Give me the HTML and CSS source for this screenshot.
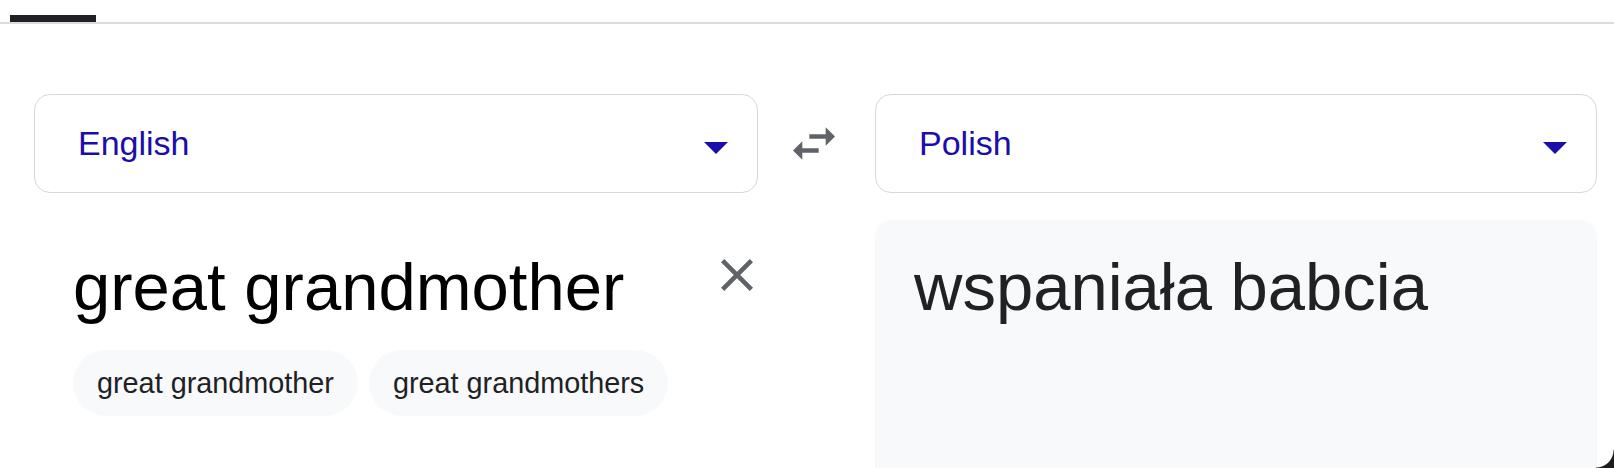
FILE: index.html
```html
<!DOCTYPE html>
<html lang="en">
<head>
<meta charset="utf-8">
<title>Translate</title>
<link rel="stylesheet" href="styles.css">
</head>
<body>
<div class="tabs"><span class="tab-indicator"></span></div>
<main class="translator">
  <div class="lang-select"><span class="lang-name">English</span><span class="caret"></span></div>
  <div class="swap">
    <svg class="swap-icon" viewBox="3 5 18 14" width="42" height="33" aria-hidden="true"><path d="M6.99 11L3 15l3.99 4v-3H14v-2H6.99v-3zM21 9l-3.99-4v3H10v2h7.01v3L21 9z"/></svg>
  </div>
  <div class="lang-select"><span class="lang-name">Polish</span><span class="caret"></span></div>

  <section class="source">
    <div class="source-row">
      <div class="source-text">great grandmother</div>
      <div class="clear-btn">
        <svg viewBox="5 5 14 14" width="32" height="32" aria-hidden="true"><path d="M19 6.41L17.59 5 12 10.59 6.41 5 5 6.41 10.59 12 5 17.59 6.41 19 12 13.41 17.59 19 19 17.59 13.41 12z"/></svg>
      </div>
    </div>
    <div class="chips">
      <span class="chip">great grandmother</span>
      <span class="chip">great grandmothers</span>
    </div>
  </section>
  <div class="spacer"></div>
  <section class="target">
    <div class="target-text">wspaniała babcia</div>
  </section>
</main>
<div class="screen-corner"></div>
</body>
</html>
```
FILE: styles.css
```css
html, body {
  margin: 0;
  padding: 0;
  overflow: hidden;
  background: #ffffff;
  font-family: "Liberation Sans", Arial, sans-serif;
}

.tabs {
  height: 22px;
  border-bottom: 2px solid #dadce0;
  display: flex;
  align-items: flex-end;
}

.tab-indicator {
  display: block;
  width: 86px;
  height: 7px;
  margin-left: 10px;
  background: #202124;
}

.translator {
  display: grid;
  grid-template-columns: 724px 117px 722px;
  row-gap: 27px;
  padding: 70px 17px 0 34px;
}

.lang-select {
  height: 99px;
  box-sizing: border-box;
  border: 1px solid #d6d7dc;
  border-radius: 16px;
  display: flex;
  align-items: center;
  justify-content: space-between;
  padding: 0 29px 0 43px;
  color: #1a0dab;
  font-size: 34px;
}

.caret {
  width: 0;
  height: 0;
  border-left: 12px solid transparent;
  border-right: 12px solid transparent;
  border-top: 12px solid #1a0dab;
  margin-top: 9px;
}

.swap {
  display: flex;
  align-items: center;
  justify-content: center;
  padding-right: 5px;
}

.swap-icon {
  fill: #5f6368;
}

.source {
  padding-left: 39px;
}

.source-row {
  display: flex;
  align-items: flex-start;
}

.source-text {
  flex: 1;
  padding-top: 27px;
  font-size: 67px;
  line-height: 80px;
  color: #000000;
}

.clear-btn {
  margin-top: 39px;
  margin-right: 5px;
  width: 32px;
  height: 32px;
  fill: #5f6368;
}

.clear-btn svg {
  display: block;
}

.chips {
  display: flex;
  gap: 11px;
  margin-top: 23px;
}

.chip {
  display: inline-flex;
  align-items: center;
  height: 66px;
  padding: 0 24px;
  border-radius: 33px;
  background: #f8f9fa;
  color: #202124;
  font-size: 28.8px;
}

.target {
  background: #f8f9fa;
  border-radius: 16px 16px 0 0;
  height: 270px;
  padding: 27px 39px 0 39px;
  box-sizing: border-box;
}

.target-text {
  font-size: 67px;
  line-height: 80px;
  color: #202124;
}

.screen-corner {
  position: fixed;
  right: 0;
  bottom: 0;
  width: 18px;
  height: 18px;
  background: radial-gradient(circle at 0 0, transparent 17px, #1e1c1a 18px);
}
```
